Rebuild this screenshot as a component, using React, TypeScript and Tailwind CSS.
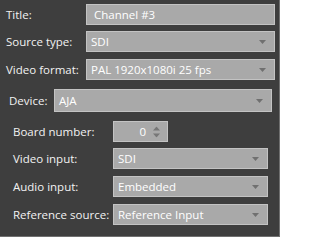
import React from 'react';

const Arrow: React.FC = () => (
  <svg width="7" height="4" viewBox="0 0 7 4" className="absolute right-[8px] top-1/2 -translate-y-1/2">
    <path d="M0 0h7L3.5 4z" fill="#707070" />
  </svg>
);

const Combo: React.FC<{ value: string; className?: string }> = ({ value, className = '' }) => (
  <div
    className={`relative flex h-[21px] items-center border border-[#c3c3c3] bg-[#a9a9a9] pl-[4px] text-white ${className}`}
  >
    <span className="leading-none whitespace-nowrap">{value}</span>
    <Arrow />
  </div>
);

const Row: React.FC<{ label: string; labelW: string; children: React.ReactNode; className?: string }> = ({
  label,
  labelW,
  children,
  className = '',
}) => (
  <div className={`flex items-center ${className}`}>
    <span className={`${labelW} shrink-0 whitespace-nowrap`}>{label}</span>
    <div className="min-w-0 flex-1">{children}</div>
  </div>
);

const App: React.FC = () => {
  return (
    <div
      className="h-[237px] w-[280px] overflow-hidden border-r border-b border-[#707070] bg-[#3e3e3e] text-[11.5px] text-[#f2f2f2]"
      style={{ fontFamily: '"Open Sans", "Noto Sans", sans-serif' }}
    >
      <div className="pl-[6px] pr-[4px] pt-[4px]">
        <Row label="Title:" labelW="w-[80px]">
          <div className="flex h-[21px] items-center border border-[#c3c3c3] bg-[#a9a9a9] pl-[7px] text-white">
            <span className="leading-none">Channel #3</span>
          </div>
        </Row>
        <Row label="Source type:" labelW="w-[80px]" className="mt-[6px]">
          <Combo value="SDI" />
        </Row>
        <Row label="Video format:" labelW="w-[80px]" className="mt-[7px]">
          <Combo value="PAL 1920x1080i 25 fps" />
        </Row>
      </div>

      <div className="pl-[9px] pr-[7px] pt-[9px]">
        <Row label="Device:" labelW="w-[45px]">
          <Combo value="AJA" className="h-[23px]" />
        </Row>
      </div>

      <div className="pl-[13px] pr-[11px] pt-[9px]">
        <Row label="Board number:" labelW="w-[100px]">
          <div className="relative flex h-[21px] w-[55px] items-center justify-end border border-[#c3c3c3] bg-[#a9a9a9] pr-[21px] text-white">
            <span className="leading-none">0</span>
            <svg width="7" height="11" viewBox="0 0 7 11" className="absolute right-[7px] top-1/2 -translate-y-1/2">
              <path d="M0 4h7L3.5 0z" fill="#777777" />
              <path d="M0 7h7L3.5 11z" fill="#777777" />
            </svg>
          </div>
        </Row>
        <Row label="Video input:" labelW="w-[100px]" className="mt-[6px]">
          <Combo value="SDI" />
        </Row>
        <Row label="Audio input:" labelW="w-[100px]" className="mt-[7px]">
          <Combo value="Embedded" />
        </Row>
        <Row label="Reference source:" labelW="w-[100px]" className="mt-[7px]">
          <Combo value="Reference Input" />
        </Row>
      </div>
    </div>
  );
};

export default App;
